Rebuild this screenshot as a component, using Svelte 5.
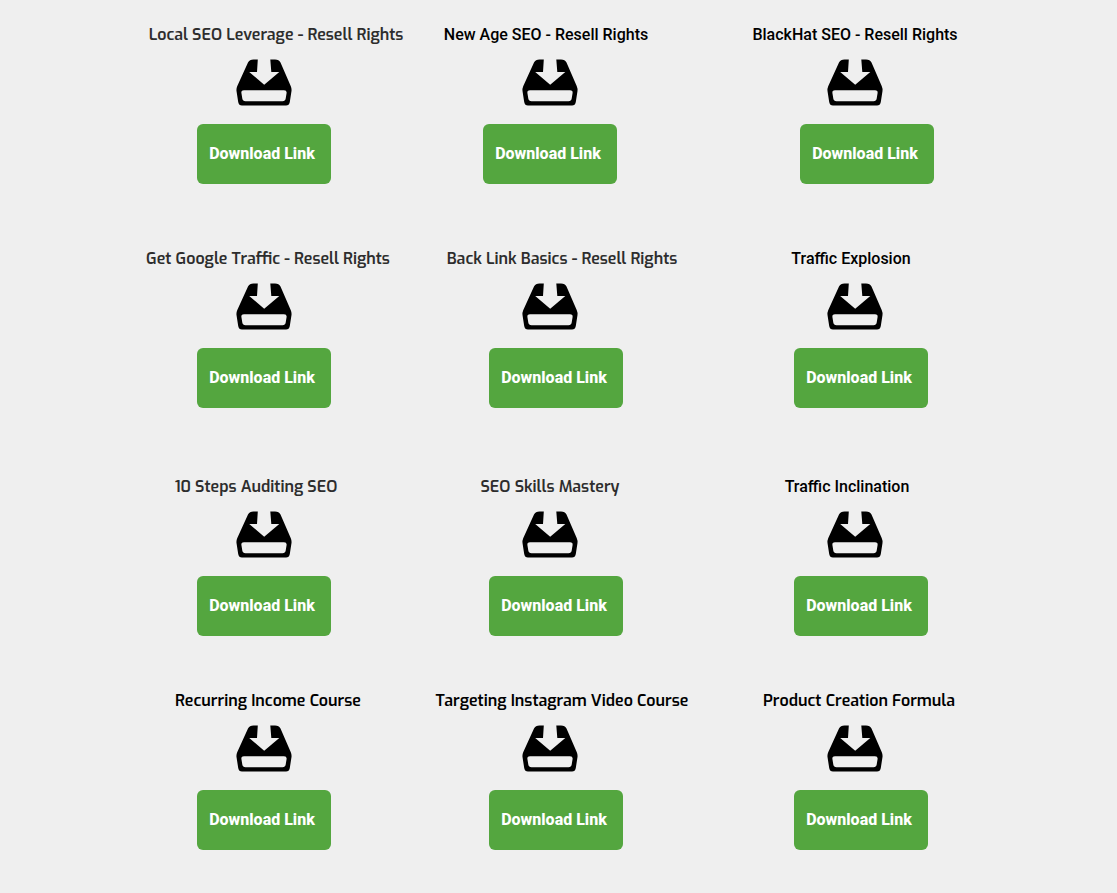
<script>
  const courses = [
    { title: 'Local SEO Leverage - Resell Rights', font: 'exo', soft: true, shift: 'right' },
    { title: 'New Age SEO - Resell Rights', shift: 'left-sm' },
    { title: 'BlackHat SEO - Resell Rights', action: 'offset-lg' },
    { title: 'Get Google Traffic - Resell Rights', font: 'exo', soft: true, shift: 'right-sm' },
    { title: 'Back Link Basics - Resell Rights', font: 'exo', soft: true, shift: 'right', action: 'offset' },
    { title: 'Traffic Explosion', shift: 'left-sm', action: 'offset' },
    { title: '10 Steps Auditing SEO', font: 'exo', soft: true, shift: 'left' },
    { title: 'SEO Skills Mastery', font: 'exo', soft: true, action: 'offset' },
    { title: 'Traffic Inclination', shift: 'left', action: 'offset' },
    { title: 'Recurring Income Course', font: 'exo', shift: 'right-sm' },
    { title: 'Targeting Instagram Video Course', font: 'exo', shift: 'right', action: 'offset' },
    { title: 'Product Creation Formula', font: 'exo', shift: 'right-sm', action: 'offset' },
  ]
</script>

<main class="courses">
  {#each courses as course}
    <article class="card">
      <h2 class={course.shift} class:exo={course.font === 'exo'} class:soft={course.soft}>
        {course.title}
      </h2>
      <svg class="icon" viewBox="0 0 56 47" aria-hidden="true">
        <path
          fill-rule="evenodd"
          d="M21.800 .5H17.500Q13.500 .5 12 3.500L1.300 27Q.2 29.500 .5 32L2.200 43Q2.800 46.500 6 46.500H50Q53.200 46.500 53.800 43L55.500 32Q55.800 29.500 54.700 27L44.500 3.500Q43 .5 39 .5H34.300L35.300 13H43.300L28.200 25.800L13.200 13H21ZM8 31.200H48Q51 31.200 50.600 34L49.700 39.500Q49.200 42.300 46.500 42.300H9.500Q6.800 42.300 6.300 39.500L5.400 34Q5 31.200 8 31.200Z"
        />
      </svg>
      <div class="action {course.action ?? ''}">
        <a class="download" href="#download">Download Link</a>
      </div>
    </article>
  {/each}
</main>

<style>
  :global(body) {
    margin: 0;
    background: #efefef;
  }
  .courses {
    display: grid;
    grid-template-columns: 286fr 286fr 324fr;
    grid-template-rows: 224px 228px 214px auto;
    padding: 25px 100px 40px 121px;
    font-family: Roboto, sans-serif;
    font-size: 16px;
    line-height: 20px;
  }
  .card {
    display: flex;
    flex-direction: column;
    align-items: center;
  }
  h2 {
    margin: 0;
    color: #000;
    font-size: 16px;
    font-weight: 500;
    white-space: nowrap;
  }
  h2.exo {
    font-family: Exo, 'Exo 2', Roboto, sans-serif;
    font-weight: 600;
  }
  h2.soft {
    color: #2d2d2d;
  }
  h2.left {
    padding-right: 16px;
  }
  h2.left-sm {
    padding-right: 8px;
  }
  h2.right {
    padding-left: 24px;
  }
  h2.right-sm {
    padding-left: 8px;
  }
  .icon {
    width: 56px;
    height: 47px;
    margin: 14px 0 18px;
  }
  .offset {
    padding-left: 12px;
  }
  .offset-lg {
    padding-left: 24px;
  }
  .download {
    display: flex;
    align-items: center;
    justify-content: center;
    box-sizing: border-box;
    width: 134px;
    height: 60px;
    padding-right: 4px;
    border-radius: 6px;
    background: #54a63f;
    color: #fff;
    font-weight: 800;
    text-decoration: none;
  }
  .download:hover {
    background: #4a9637;
  }
</style>
